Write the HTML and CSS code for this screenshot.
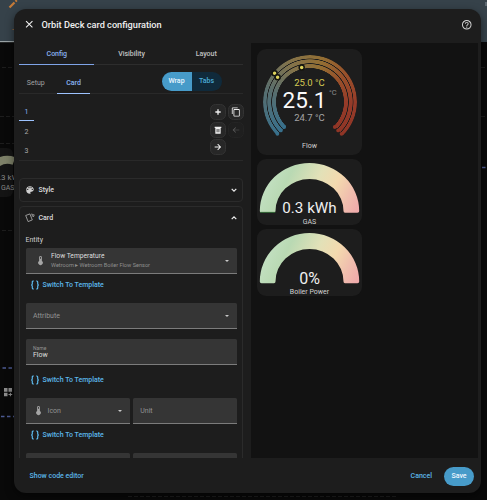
FILE: index.html
```
<!DOCTYPE html>
<html lang="en">
<head>
    <meta charset="UTF-8">
    <meta name="viewport" content="width=device-width, initial-scale=1.0">
    <title>Orbit Deck card configuration</title>
    <link rel="stylesheet" href="styles.css">
</head>
<body>

<!-- Dashboard behind the dialog -->
<div class="dashboard">
    <svg class="dashboard-art" width="487" height="500" viewBox="0 0 487 500">
        <rect width="487" height="42" fill="#36424a"/>
        <rect y="41" width="15" height="1.2" fill="#9aa3a6"/>
        <path d="M9.5 7.5l5-5M15.5 1.500l1.300-1.300" stroke="#c47a38" stroke-width="2.200"/>
        <path d="M12.500 29.500h2" stroke="#8a6038" stroke-width="1"/>
        <path d="M486 2v4" stroke="#87919a" stroke-width="1"/>
        <path d="M2 67.500h12M0 116.500h14M0 143.500h14M2 230.500h12M481 67.500h6M481 116.500h6M128 496.500h270" stroke="#1d1d1d" stroke-dasharray="4 2"/>
        <rect x="-60" y="148" width="73" height="49" rx="6" fill="#141414"/>
        <path d="M-4 164Q4 157.500 14 161" fill="none" stroke="#7d8068" stroke-width="8"/>
        <path d="M2.500 368h12M1 416.500h14M482 167.500h4" stroke="#4c5a92" stroke-width="1.300" stroke-dasharray="3.500 2.500"/>
        <path d="M4 388h3.500v3.700H4zM8.500 388H12v3.700H8.500zM4 392.700h3.500v3.600H4zM9.900 392.700h1v1.300h1.300v1h-1.300v1.300h-1v-1.300H8.500v-1h1.400z" fill="#8c8c8c"/>
    </svg>
    <div class="dashboard-value">.3 kWh</div>
    <div class="dashboard-label">GAS</div>
</div>

<div class="dialog">
    <div class="dialog-header">
        <svg class="close" viewBox="0 0 8 8"><path d="M1 1l6 6M7 1L1 7"/></svg>
        <h1>Orbit Deck card configuration</h1>
        <svg class="help" viewBox="0 0 24 24"><path d="M11 18h2v-2h-2v2m1-16A10 10 0 0 0 2 12a10 10 0 0 0 10 10 10 10 0 0 0 10-10A10 10 0 0 0 12 2m0 18c-4.410 0-8-3.590-8-8s3.590-8 8-8 8 3.590 8 8-3.590 8-8 8m0-14a4 4 0 0 0-4 4h2a2 2 0 0 1 2-2 2 2 0 0 1 2 2c0 2-3 1.750-3 5h2c0-2.250 3-2.500 3-5a4 4 0 0 0-4-4z"/></svg>
    </div>

    <div class="dialog-body">
        <div class="editor">
            <div class="tabs">
                <div class="tab active">Config</div>
                <div class="tab">Visibility</div>
                <div class="tab">Layout</div>
            </div>

            <div class="subtabs">
                <div class="subtab">Setup</div>
                <div class="subtab active">Card</div>
                <div class="toggle">
                    <span class="on">Wrap</span>
                    <span>Tabs</span>
                </div>
            </div>

            <div class="cards">
                <div class="card-list">
                    <div class="card-num active">1</div>
                    <div class="card-num">2</div>
                    <div class="card-num">3</div>
                </div>
                <div class="card-actions">
                    <button><svg viewBox="0 0 24 24"><path d="M20 14h-6v6h-4v-6H4v-4h6V4h4v6h6v4z"/></svg></button>
                    <button><svg class="large" viewBox="0 0 24 24"><path d="M19 21H8V7h11m0-2H8a2 2 0 0 0-2 2v14a2 2 0 0 0 2 2h11a2 2 0 0 0 2-2V7a2 2 0 0 0-2-2m-3-4H4a2 2 0 0 0-2 2v14h2V3h12V1z"/></svg></button>
                    <button><svg viewBox="0 0 24 24"><path fill-rule="evenodd" d="M2 2h20v4H2zM4 6h16v17H4zM8 9v10h2.500V9zm5.500 0v10H16V9z"/></svg></button>
                    <button class="disabled"><svg viewBox="0 0 24 24"><path d="M22 11v2H6l6 6-1.500 1.500L2 12l8.500-8.500L12 5l-6 6h16z"/></svg></button>
                    <button><svg viewBox="0 0 24 24"><path d="M2 10.500v3h14l-6 6 2 2 9.500-9.500L12 2.500l-2 2 6 6H2z"/></svg></button>
                </div>
            </div>

            <div class="panel style-panel">
                <div class="panel-header">
                    <svg class="panel-icon" viewBox="0 0 24 24"><path fill-rule="evenodd" d="M17.500 12a1.500 1.500 0 1 1 0-3 1.500 1.500 0 0 1 0 3m-3-4a1.500 1.500 0 1 1 0-3 1.500 1.500 0 0 1 0 3m-5 0a1.500 1.500 0 1 1 0-3 1.500 1.500 0 0 1 0 3m-3 4a1.500 1.500 0 1 1 0-3 1.500 1.500 0 0 1 0 3M12 3a9 9 0 0 0 0 18 1.500 1.500 0 0 0 1.500-1.500c0-.4-.150-.740-.390-1-.230-.270-.380-.620-.380-1A1.500 1.500 0 0 1 14.230 16H16a5 5 0 0 0 5-5c0-4.420-4.030-8-9-8z"/></svg>
                    <span>Style</span>
                    <svg class="chevron" viewBox="0 0 8 8"><path d="M1.700 2.900L4 5.200l2.300-2.300"/></svg>
                </div>
            </div>

            <div class="panel card-panel">
                <div class="panel-header">
                    <svg class="panel-icon outline" viewBox="0 0 10 10"><path d="M.7 2.500l4.200-1.600 2.400 6-4.200 1.700zM6.200 1.100h1.100v2.500M8.300 1.400l.9.400-.8 2.200"/></svg>
                    <span>Card</span>
                    <svg class="chevron" viewBox="0 0 8 8"><path d="M1.700 5.200L4 2.900l2.300 2.300"/></svg>
                </div>

                <div class="form">
                    <label class="form-label">Entity</label>
                    <div class="field entity">
                        <svg class="thermo" viewBox="0 0 24 24"><path d="M15 13V5a3 3 0 0 0-6 0v8a5 5 0 1 0 6 0m-3-9a1 1 0 0 1 1 1v3h-2V5a1 1 0 0 1 1-1z"/></svg>
                        <div class="field-text">
                            <div class="value">Flow Temperature</div>
                            <div class="sub">Wetroom ▸ Wetroom Boiler Flow Sensor</div>
                        </div>
                        <i class="arrow"></i>
                    </div>
                    <div class="switch"><svg viewBox="0 0 10 10"><path d="M3.800 1h-.5q-1 0-1 1v1.700Q2.300 5 1.100 5 2.300 5 2.300 6.300V8q0 1 1 1h.5M6.200 1h.5q1 0 1 1v1.700Q7.700 5 8.900 5 7.700 5 7.700 6.300V8q0 1-1 1h-.5"/></svg>Switch To Template</div>

                    <div class="field attribute">
                        <div class="placeholder">Attribute</div>
                        <i class="arrow"></i>
                    </div>

                    <div class="field name">
                        <div class="field-text">
                            <div class="caption">Name</div>
                            <div class="value">Flow</div>
                        </div>
                    </div>
                    <div class="switch"><svg viewBox="0 0 10 10"><path d="M3.800 1h-.5q-1 0-1 1v1.700Q2.300 5 1.100 5 2.300 5 2.300 6.300V8q0 1 1 1h.5M6.200 1h.5q1 0 1 1v1.700Q7.700 5 8.900 5 7.700 5 7.700 6.300V8q0 1-1 1h-.5"/></svg>Switch To Template</div>

                    <div class="field-row">
                        <div class="field icon-field">
                            <svg class="thermo" viewBox="0 0 24 24"><path d="M15 13V5a3 3 0 0 0-6 0v8a5 5 0 1 0 6 0m-3-9a1 1 0 0 1 1 1v3h-2V5a1 1 0 0 1 1-1z"/></svg>
                            <div class="placeholder">Icon</div>
                            <i class="arrow"></i>
                        </div>
                        <div class="field">
                            <div class="placeholder">Unit</div>
                        </div>
                    </div>
                    <div class="switch"><svg viewBox="0 0 10 10"><path d="M3.800 1h-.5q-1 0-1 1v1.700Q2.300 5 1.100 5 2.300 5 2.300 6.300V8q0 1 1 1h.5M6.200 1h.5q1 0 1 1v1.700Q7.700 5 8.900 5 7.700 5 7.700 6.300V8q0 1-1 1h-.5"/></svg>Switch To Template</div>

                    <div class="field-row last">
                        <div class="field"></div>
                        <div class="field"></div>
                    </div>
                </div>
            </div>
        </div>

        <div class="preview">
            <div class="gauge-card flow-card">
                <div class="ring"></div>
                <svg class="overlay" viewBox="0 0 105 105">
                    <g fill="#38708c">
                        <circle cx="20.400" cy="84.800" r="1.900"/>
                        <circle cx="23.800" cy="81.400" r="1.900"/>
                        <circle cx="27.200" cy="78" r="1.900"/>
                    </g>
                    <g fill="#8f3526">
                        <circle cx="84.600" cy="84.800" r="1.900"/>
                        <circle cx="81.200" cy="81.400" r="1.900"/>
                        <circle cx="77.800" cy="78" r="1.900"/>
                    </g>
                    <g fill="#dcd25c" stroke="#14150f" stroke-width="1.500">
                        <circle cx="17.600" cy="24.300" r="2.500"/>
                        <circle cx="20.600" cy="28.200" r="2.500"/>
                        <circle cx="44.700" cy="18.400" r="2.500"/>
                    </g>
                </svg>
                <div class="readings">
                    <div class="high">25.0 °C</div>
                    <div class="current">25.1<span class="unit">°C</span></div>
                    <div class="low">24.7 °C</div>
                </div>
                <div class="gauge-name">Flow</div>
            </div>

            <div class="gauge-card arch-card">
                <svg viewBox="0 0 105 55">
                    <defs>
                        <linearGradient id="arch" x1="0" y1="0.600" x2="1" y2="0.850">
                            <stop offset="0" stop-color="#c3e0c2"/>
                            <stop offset="0.200" stop-color="#b9d9b3"/>
                            <stop offset="0.480" stop-color="#e2e1b8"/>
                            <stop offset="0.680" stop-color="#f3d9ae"/>
                            <stop offset="0.850" stop-color="#f0bfae"/>
                            <stop offset="1" stop-color="#efabab"/>
                        </linearGradient>
                    </defs>
                    <path d="M4.500 53.700Q2.800 53.700 2.800 52A49.700 48 0 0 1 102.200 52Q102.200 53.700 100.500 53.700H88Q86.500 53.700 86.500 52A34 32 0 0 0 18.500 52Q18.500 53.700 17 53.700z" fill="url(#arch)"/>
                    <path d="M3.300 53.400h14.900" stroke="#285a2c" stroke-width="1"/>
                </svg>
                <div class="arch-value">0.3 kWh</div>
                <div class="gauge-name">GAS</div>
            </div>

            <div class="gauge-card arch-card">
                <svg viewBox="0 0 105 55">
                    <path d="M4.500 54.200Q2.800 54.200 2.800 52.500A49.700 48.500 0 0 1 102.200 52.500Q102.200 54.200 100.500 54.200H88Q86.500 54.200 86.500 52.500A34 32.500 0 0 0 18.500 52.500Q18.500 54.200 17 54.200z" fill="url(#arch)"/>
                </svg>
                <div class="arch-value percent">0%</div>
                <div class="gauge-name">Boiler Power</div>
            </div>
        </div>
    </div>

    <div class="dialog-footer">
        <a class="code">Show code editor</a>
        <a class="cancel">Cancel</a>
        <button class="save">Save</button>
    </div>
</div>

</body>
</html>
```

FILE: styles.css
```
* {
    box-sizing: border-box;
    margin: 0;
    padding: 0;
}

body, html {
    height: 100%;
    overflow: hidden;
}

body {
    background: #090909;
    color: #dcdcdc;
    font-family: Roboto, sans-serif;
    font-size: 7px;
    line-height: 10px;
    padding: 9px 6px 7px 14px;
}

svg {
    display: block;
    flex: none;
}

button {
    border: none;
    font-family: inherit;
}

/* Dashboard behind the dialog */
.dashboard {
    position: absolute;
    top: 0;
    left: 0;
    width: 487px;
    height: 500px;
}

.dashboard-value,
.dashboard-label {
    position: absolute;
    color: #888;
    font-size: 8px;
    white-space: nowrap;
}

.dashboard-value {
    left: -1px;
    top: 173px;
}

.dashboard-label {
    left: 1px;
    top: 183px;
    font-size: 7px;
}

.dialog {
    position: relative;
    height: 484px;
    width: 467px;
    background: #1d1d1d;
    border-radius: 12px;
    overflow: hidden;
    display: flex;
    flex-direction: column;
    box-shadow: 0 3px 8px rgba(0, 0, 0, 0.5);
}

.dialog-header {
    height: 34px;
    display: flex;
    align-items: center;
    padding: 0 9px 3px 11px;
}

.dialog-header h1 {
    flex: 1;
    margin-left: 8px;
    font-size: 9.200px;
    font-weight: 500;
    color: #f0f0f0;
}

.close {
    width: 8.500px;
    height: 8.500px;
    stroke: #f0f0f0;
}

.help {
    width: 11.500px;
    height: 11.500px;
    fill: #d4d4d4;
}

.dialog-body {
    height: 415px;
    display: flex;
    overflow: hidden;
}

.editor {
    width: 237px;
    padding: 0 8px 0 5px;
}

/* Tabs */
.tabs {
    display: flex;
    height: 22px;
    border-bottom: 1px solid #2d2d2d;
}

.tab {
    flex: 1;
    height: 22px;
    line-height: 22px;
    text-align: center;
    padding-left: 1px;
    color: #c2c2c2;
    font-weight: 500;
}

.tab.active {
    color: #8ab4f3;
    border-bottom: 1.500px solid #7fa4e8;
}

.subtabs {
    display: flex;
    height: 29px;
    padding-top: 9px;
    border-bottom: 1px solid #292929;
}

.subtab {
    width: 38px;
    height: 20px;
    line-height: 18px;
    text-align: center;
    padding-right: 4.500px;
    color: #a2a2a2;
}

.subtab.active {
    width: 33px;
    padding: 0;
    color: #8ab4f3;
    border-bottom: 1.500px solid #9dc3ff;
    font-weight: 500;
}

.toggle {
    display: flex;
    width: 60px;
    height: 19px;
    margin: -2px 21.500px 0 auto;
    border-radius: 10px;
    overflow: hidden;
    background: #102a3b;
    color: #4badd9;
    font-weight: 500;
    line-height: 19px;
    text-align: center;
}

.toggle span {
    flex: 1;
}

.toggle .on {
    background: #479bc9;
    color: #eaf6ff;
}

/* Cards of the deck */
.cards {
    display: flex;
    justify-content: space-between;
    height: 67px;
    border-bottom: 1px solid #292929;
}

.card-list {
    padding-top: 10px;
    width: 15px;
}

.card-num {
    height: 19.500px;
    line-height: 19px;
    text-align: center;
    color: #aaa;
}

.card-num.active {
    height: 17px;
    line-height: 17px;
    margin-bottom: 1.500px;
    color: #8ab4f3;
    border-bottom: 1.500px solid #9dc3ff;
}

.card-actions {
    display: grid;
    grid-template-columns: 16px 16px;
    grid-auto-rows: 16px;
    gap: 1.500px 1.500px;
    padding-top: 10px;
    margin-right: -0.500px;
}

.card-actions button {
    display: flex;
    align-items: center;
    justify-content: center;
    border-radius: 5.500px;
    border: 1px solid #333;
    background: #272727;
}

.card-actions svg {
    width: 8px;
    height: 8px;
    fill: #f0f0f0;
}

.card-actions .large {
    width: 10px;
    height: 10px;
}

.card-actions .disabled {
    background: #1f1f1f;
    border-color: #242424;
}

.card-actions .disabled svg {
    fill: #5c5c5c;
}

/* Panels */
.panel {
    border: 1px solid #2b2b2b;
    border-radius: 4px;
}

.style-panel {
    height: 24px;
    margin-top: 17px;
}

.card-panel {
    height: 300px;
    margin-top: 4px;
}

.panel-header {
    height: 22px;
    display: flex;
    align-items: center;
    padding: 0 4.500px 0 4.500px;
    font-weight: 500;
}

.panel-header span {
    flex: 1;
    margin-left: 4px;
}

.panel-icon {
    width: 10px;
    height: 10px;
    fill: #cfcfcf;
}

.panel-icon.outline {
    fill: none;
    stroke: #b5b5b5;
    stroke-width: 0.800;
}

.chevron {
    width: 8px;
    height: 8px;
    fill: none;
    stroke: #eee;
    stroke-width: 1.200;
}

/* Form */
.form {
    padding: 5.500px 5px 0 5.500px;
}

.form-label {
    display: block;
    height: 13.500px;
    color: #cfcfcf;
}

.field {
    height: 26px;
    display: flex;
    align-items: center;
    padding: 0 8px 0 7.500px;
    background: #353535;
    border-bottom: 1px solid #7c7c7c;
    border-radius: 1.500px 1.500px 0 0;
}

.field.entity {
    padding-left: 9px;
}

.thermo {
    width: 11px;
    height: 11px;
    fill: #a5a5a5;
}

.entity .field-text {
    margin-left: 5.500px;
}

.field-text {
    line-height: 9px;
}

.value {
    color: #dedede;
}

.entity .value {
    font-size: 6.700px;
}

.sub {
    font-size: 5.600px;
    color: #8f8f8f;
}

.caption {
    font-size: 5px;
    line-height: 6px;
    color: #929292;
}

.name .field-text {
    padding-top: 2px;
}

.placeholder {
    color: #939393;
}

.arrow {
    margin-left: auto;
    border: 2px solid transparent;
    border-top-color: #c8c8c8;
    border-bottom: none;
}

.switch {
    display: flex;
    align-items: center;
    height: 21px;
    padding-left: 4px;
    color: #5cb8ea;
    font-weight: 500;
}

.switch svg {
    width: 10px;
    height: 10px;
    margin-right: 3px;
    fill: none;
    stroke: #5cb8ea;
    stroke-width: 1.200;
}

.attribute {
    margin-top: 8px;
}

.field.name {
    margin-top: 10px;
}

.name + .switch {
    height: 29px;
}

.field-row {
    display: flex;
    gap: 3px;
    margin-top: 4px;
}

.field-row .field {
    flex: 1;
}

.icon-field .thermo {
    margin-right: 3.500px;
}

.field-row.last {
    margin-top: 8px;
}

/* Preview */
.preview {
    width: 227px;
    height: 415px;
    background: #121212;
    padding: 6px;
    display: flex;
    flex-direction: column;
    gap: 4px;
}

.gauge-card {
    position: relative;
    width: 105px;
    height: 66px;
    border-radius: 9px;
    background: #1d1d1d;
    text-align: center;
}

.gauge-card:last-child {
    height: 67px;
}

.flow-card {
    height: 106px;
    padding-top: 28px;
}

.ring {
    position: absolute;
    left: 5.500px;
    top: 5.700px;
    width: 94px;
    height: 94px;
    border-radius: 50%;
    background: conic-gradient(from 225deg, #38708c, #566e70 16%, #83734a 30%, #936e33 42%, #98502a 52%, #953b29 63%, #8f3526 75%, transparent 75%);
    -webkit-mask: radial-gradient(circle closest-side, transparent 33.700px, #000 34.200px 37.600px, transparent 38.100px 38.500px, #000 39px 42.400px, transparent 42.900px 43.200px, #000 43.700px 47px);
    mask: radial-gradient(circle closest-side, transparent 33.700px, #000 34.200px 37.600px, transparent 38.100px 38.500px, #000 39px 42.400px, transparent 42.900px 43.200px, #000 43.700px 47px);
}

.overlay {
    position: absolute;
    top: 0;
    left: 0;
    width: 105px;
    height: 105px;
}

.readings {
    position: relative;
}

.high,
.low {
    font-size: 9.500px;
    line-height: 12px;
    color: #d6cb55;
}

.low {
    color: #a5a5a5;
}

.current {
    font-size: 22.500px;
    line-height: 23px;
    padding-right: 10px;
    color: #fafafa;
}

.unit {
    position: absolute;
    top: 11px;
    left: 72px;
    font-size: 7.500px;
    line-height: 10px;
    color: #8d8d8d;
}

.gauge-name {
    font-size: 7px;
    line-height: 9px;
    color: #d2d2d2;
}

.flow-card .gauge-name {
    margin-top: 18px;
}

.arch-card svg {
    width: 105px;
    height: 55px;
}

.arch-value {
    margin-top: -15px;
    font-size: 15.200px;
    line-height: 19px;
    color: #f0f0f0;
}

.arch-value.percent {
    font-size: 16px;
}

/* Footer */
.dialog-footer {
    flex: 1;
    display: flex;
    align-items: center;
    padding: 1px 7px 0 15.500px;
    color: #5cb8ea;
    font-weight: 500;
}

.cancel {
    margin-left: auto;
    margin-right: 12px;
}

.save {
    width: 30px;
    height: 19px;
    border-radius: 10px;
    background: #479bc9;
    color: #f0f8ff;
    font-size: 7px;
    font-weight: 500;
}
```
